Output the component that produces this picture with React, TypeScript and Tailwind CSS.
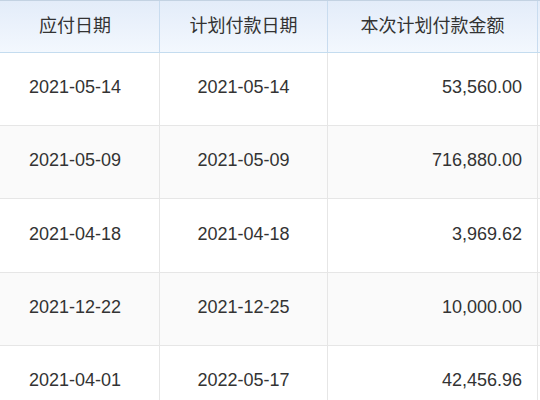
const ROWS = [
  { due: '2021-05-14', plan: '2021-05-14', amount: '53,560.00', h: 'h-[73px]' },
  { due: '2021-05-09', plan: '2021-05-09', amount: '716,880.00', h: 'h-[73px]' },
  { due: '2021-04-18', plan: '2021-04-18', amount: '3,969.62', h: 'h-[74px]' },
  { due: '2021-12-22', plan: '2021-12-25', amount: '10,000.00', h: 'h-[73px]' },
  { due: '2021-04-01', plan: '2022-05-17', amount: '42,456.96', h: 'h-[73px]' },
];

export default function App() {
  return (
    <div className="w-[540px] h-[400px] overflow-hidden bg-white text-[18px] text-[#333] font-['Liberation_Sans','Noto_Sans_CJK_SC',sans-serif]">
      <div className="w-[740px]">

        {/* header */}
        <div className="grid grid-cols-[160px_168px_210px_200px] h-[53px] border-y border-t-[#c3d2e2] border-b-[#c4dcef] bg-gradient-to-b from-[#e3ecf9] to-[#f3f8fe]">
          <div className="flex items-center justify-center pr-[9px] border-r border-[#c9dcef]">应付日期</div>
          <div className="flex items-center justify-center border-r border-[#c9dcef]">计划付款日期</div>
          <div className="flex items-center justify-center border-r border-[#c9dcef]">本次计划付款金额</div>
          <div />
        </div>

        {/* rows */}
        {ROWS.map((r, i) => (
          <div
            key={i}
            className={`grid grid-cols-[160px_168px_210px_200px] ${r.h} border-b border-[#e6e6e6] ${i % 2 === 1 ? 'bg-[#fafafa]' : 'bg-white'}`}
          >
            <div className="flex items-center justify-center pr-[9px] pb-[3px] border-r border-[#e6e6e6]">{r.due}</div>
            <div className="flex items-center justify-center pb-[3px] border-r border-[#e6e6e6]">{r.plan}</div>
            <div className="flex items-center justify-end pr-[15px] pb-[3px] border-r border-[#e6e6e6]">{r.amount}</div>
            <div />
          </div>
        ))}

      </div>
    </div>
  );
}
